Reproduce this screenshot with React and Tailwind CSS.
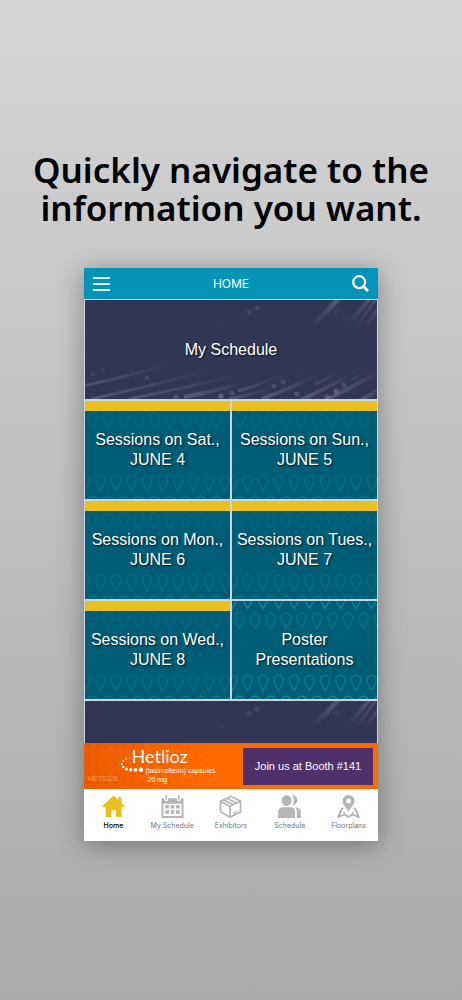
import React from "react";

const DROP_ROWS = [-8, 12, 33, 54, 74, 95];

function Drops({ strengths }) {
  return (
    <svg
      className="absolute inset-0 h-full w-full"
      viewBox="0 0 145 98"
      preserveAspectRatio="xMidYMid slice"
      fill="none"
      stroke="#0a9db8"
      strokeWidth="1.3"
      aria-hidden="true"
    >
      {DROP_ROWS.map((y, r) =>
        Array.from({ length: 11 }, (_, c) => {
          const x = c * 15.5 + (r % 2 ? 7.5 : 0);
          return (
            <path
              key={`${r}-${c}`}
              opacity={strengths[r]}
              d={`M${x} ${y + 15.5}C${x - 2} ${y + 11.5} ${x - 4.8} ${y + 9} ${x - 4.8} ${y + 5}A4.8 4.8 0 0 1 ${x + 4.8} ${y + 5}C${x + 4.8} ${y + 9} ${x + 2} ${y + 11.5} ${x} ${y + 15.5}Z`}
            />
          );
        })
      )}
    </svg>
  );
}

const STREAKS = [
  [-2, 86, 85, 64, 0.24, 3],
  [6, 99, 125, 70, 0.26, 3],
  [44, 99, 155, 74, 0.26, 3],
  [99, 97, 158, 83, 0.3, 4],
  [153, 91, 195, 75, 0.22, 3],
  [144, 99, 185, 88, 0.26, 3],
  [177, 99, 234, 74, 0.28, 4],
  [216, 100, 266, 74, 0.3, 4],
  [241, 100, 298, 69, 0.28, 4],
  [274, 101, 298, 86, 0.3, 4],
  [230, 84, 256, 70, 0.14, 3],
  [266, 80, 284, 68, 0.1, 3],
  [254, -2, 226, 26, 0.28, 5],
  [285, -2, 262, 24, 0.24, 4],
  [292, -3, 270, 27, 0.22, 3],
  [296, 4, 278, 28, 0.18, 4],
];

const SPOTS = [
  [8, 74, 0.1], [18, 71, 0.05], [62, 78, 0.13], [91, 97, 0.22], [136, 96, 0.34],
  [147, 93, 0.2], [164, 12, 0.11], [172, 8, 0.13], [251, 12, 0.07], [189, 86, 0.2],
  [198, 82, 0.16], [212, 94, 0.22], [242, 97, 0.26], [251, 91, 0.3], [259, 85, 0.2],
  [137, 24, 0.03], [216, 73, 0.04],
];

function Streaks({ id }) {
  return (
    <svg
      className="absolute inset-x-0 top-0 h-[99px] w-full"
      viewBox="0 0 292 99"
      preserveAspectRatio="xMidYMin slice"
      fill="none"
      aria-hidden="true"
    >
      <defs>
        {STREAKS.map(([x1, y1, x2, y2, o], i) => (
          <linearGradient key={i} id={`${id}-${i}`} gradientUnits="userSpaceOnUse" x1={x1} y1={y1} x2={x2} y2={y2}>
            <stop offset="0" stopColor="#b9b6c4" stopOpacity={o} />
            <stop offset="1" stopColor="#b9b6c4" stopOpacity="0" />
          </linearGradient>
        ))}
      </defs>
      {STREAKS.map(([x1, y1, x2, y2, , w], i) => (
        <path
          key={i}
          d={`M${x1} ${y1}Q${(x1 + x2) / 2 + 1} ${(y1 + y2) / 2 + 1.5} ${x2} ${y2}`}
          stroke={`url(#${id}-${i})`}
          strokeWidth={w}
        />
      ))}
      {SPOTS.map(([x, y, o], i) => (
        <circle key={i} cx={x} cy={y} r="2.6" fill="#b9b6c4" opacity={o} />
      ))}
    </svg>
  );
}

const LABEL =
  "relative text-center font-['Liberation_Sans',sans-serif] text-base leading-5 text-white [text-shadow:1px_1px_2px_rgba(0,0,0,0.75)]";

function Session({ day, date }) {
  return (
    <a href="#sessions" className="relative flex h-[98px] items-center justify-center overflow-hidden bg-[#005d75]">
      <Drops strengths={[0, 0.18, 0.04, 0.03, 0.28, 0.45]} />
      <span className="absolute inset-x-0 top-0 h-2.5 bg-[#e9c01d]" />
      <span className={LABEL}>
        Sessions on {day},<br />
        {date}
      </span>
    </a>
  );
}

const ICONS = {
  home: (
    <path d="M12 .5.500 11.600v1.200h3.300V23h6v-7h4.600v7h6V12.800h3.100v-1.200l-3.300-3.200V2h-3.200v3.300z" />
  ),
  calendar: (
    <path
      fillRule="evenodd"
      d="M.5 3.5h3v1a2 2 0 0 0 4 0v-1h9v1a2 2 0 0 0 4 0v-1h3V24H.5zM2.5 9v13h19V9zM4.6.8a.9.9 0 0 1 1.8 0v3.4a.9.9 0 0 1-1.8 0zm13 0a.9.9 0 0 1 1.8 0v3.4a.9.9 0 0 1-1.8 0zM4.5 10.5h3.8v3.6H4.5zm5.6 0h3.8v3.6h-3.8zm5.6 0h3.8v3.6h-3.8zM4.5 16h3.8v3.6H4.5zm5.6 0h3.8v3.6h-3.8zm5.6 0h3.8v3.6h-3.8z"
    />
  ),
  box: (
    <g fill="none" stroke="currentColor" strokeWidth="1.8" strokeLinejoin="round" strokeLinecap="round">
      <path d="M12.5 1.2 1.5 6.6v11l10 5.6 11-5.6v-11zM1.5 6.6l10 5.2 11-5.2M11.5 11.8v11.4M5 5.2l10.2 4.9M8.200 3.400l10.200 4.900" />
      <path strokeWidth="1.1" d="m15 18.8 4-2M15 20.6l2-1" />
    </g>
  ),
  people: (
    <path d="M9 0.2a5.2 5.2 0 0 1 5.2 5.4C14.2 8.800 12 11.400 9 11.400S3.800 8.800 3.800 5.600A5.200 5.200 0 0 1 9 .2zM14.600.3c3.200-.4 5.600 2 5.600 4.900 0 2.900-2.200 5.400-5.200 5.300 2.200-3 2.200-7.200-.4-10.200zM.2 24v-6.200c0-3.400 1.800-5 5-5h7.600c3.200 0 5 1.600 5 5V24zM19.600 24v-6.600c0-1.800-.5-3.300-1.500-4.400 3.500-.2 5.700 1.400 5.700 4.600V24z" />
  ),
  map: (
    <>
      <path
        fillRule="evenodd"
        d="M12 0a6.300 6.300 0 0 1 6.300 6.300c0 4-4 6.500-6.300 11.500-2.300-5-6.300-7.500-6.300-11.500A6.300 6.300 0 0 1 12 0zm0 3.700a2.600 2.600 0 1 0 0 5.200 2.600 2.600 0 0 0 0-5.200z"
      />
      <path
        d="M6.600 13.600 4.800 14.600 1.500 22.800 7.600 20.300 12 22.800 16.400 20.300 22.500 22.800 19.200 14.600 17.400 13.600"
        fill="none"
        stroke="currentColor"
        strokeWidth="2"
      />
      <path d="m7 17.500 1.500 3.300M17 17.500l-1.500 3.300" stroke="currentColor" strokeWidth="1.300" />
    </>
  ),
};

const TABS = [
  ["home", "Home"],
  ["calendar", "My Schedule"],
  ["box", "Exhibitors"],
  ["people", "Schedule"],
  ["map", "Floorplans"],
];

function Ad() {
  return (
    <a
      href="#booth-141"
      className="relative flex h-[46px] items-center justify-between overflow-hidden bg-[#ff6a00] py-1 pr-[5px] pl-1"
    >
      <svg className="absolute inset-0 h-full w-full" aria-hidden="true">
        <defs>
          <pattern id="halftone" width="9" height="9" patternUnits="userSpaceOnUse">
            <circle cx="4.500" cy="3.500" r="1.800" fill="#d94f00" />
          </pattern>
          <linearGradient id="halftone-fade">
            <stop offset="0" stopColor="#fff" stopOpacity="0.400" />
            <stop offset="0.550" stopColor="#fff" stopOpacity="0.300" />
            <stop offset="1" stopColor="#fff" stopOpacity="0" />
          </linearGradient>
          <linearGradient id="ad-shade">
            <stop offset="0" stopColor="#ec5c00" />
            <stop offset="0.400" stopColor="#ec5c00" stopOpacity="0" />
          </linearGradient>
          <mask id="halftone-mask">
            <rect width="55%" height="100%" fill="url(#halftone-fade)" />
          </mask>
        </defs>
        <rect width="100%" height="100%" fill="url(#ad-shade)" />
        <rect width="100%" height="100%" fill="url(#halftone)" mask="url(#halftone-mask)" />
      </svg>
      <span className="relative self-end font-['Liberation_Sans',sans-serif] text-[7px] leading-3 text-[#ff9a58]">
        HET0325
      </span>
      <span className="relative flex flex-1 items-end text-white">
        <svg className="mb-3 h-5 w-7 shrink-0" viewBox="0 0 28 20" fill="currentColor" aria-hidden="true">
          <circle cx="11.500" cy="4" r="0.700" />
          <circle cx="8.200" cy="5" r="0.800" />
          <circle cx="5.300" cy="7" r="0.900" />
          <circle cx="4" cy="10" r="1.100" />
          <circle cx="5.200" cy="13" r="1.300" />
          <circle cx="8.400" cy="15" r="1.500" />
          <circle cx="12.700" cy="15.800" r="1.700" />
          <circle cx="17.600" cy="15.800" r="1.900" />
          <circle cx="23" cy="15.800" r="2.200" />
        </svg>
        <span className="flex flex-col pb-0.5">
          <span className="-ml-3.5 font-['Lato',sans-serif] text-lg leading-5">Hetlioz</span>
          <span className="font-['Liberation_Sans',sans-serif] text-[7px] leading-[9px]">
            (tasimelteon) capsules
            <br />
            <span className="ml-0.5">20 mg</span>
          </span>
        </span>
      </span>
      <span className="relative flex h-[37px] w-[130px] items-center justify-center bg-[#50306a] font-['Liberation_Sans',sans-serif] text-[11px] text-white">
        Join us at Booth #141
      </span>
    </a>
  );
}

export default function App() {
  return (
    <main className="min-h-screen bg-linear-to-b from-[#d5d5d5] to-[#aaaaaa] pt-[151px] pb-[159px]">
      <h1 className="text-center font-['Noto_Sans',sans-serif] text-[35px] leading-[38px] font-semibold text-black">
        Quickly navigate to the
        <br />
        information you want.
      </h1>

      <div className="mt-[41px] px-21">
        <div className="bg-white shadow-[0_4px_24px_rgba(0,0,0,0.35)]">
          <header className="flex h-[31px] items-center justify-between bg-[#0394b8] px-[9px] text-white">
            <button aria-label="Menu" className="flex w-[17px] flex-col gap-1">
              <span className="h-0.5 w-full bg-white/85" />
              <span className="h-0.5 w-full bg-white/85" />
              <span className="h-0.5 w-full bg-white/85" />
            </button>
            <span className="font-['Inter',sans-serif] text-xs">HOME</span>
            <button aria-label="Search">
              <svg className="size-[17px]" viewBox="0 0 18 18" fill="none" stroke="currentColor" strokeWidth="2.400" aria-hidden="true">
                <circle cx="7.600" cy="7.600" r="6.300" />
                <path d="m12 12 5 5" strokeWidth="3" />
              </svg>
            </button>
          </header>

          <div className="grid grid-cols-2 gap-0.5 bg-[#ccd5da] px-px pt-px">
            <a href="#my-schedule" className="relative col-span-2 flex h-[99px] items-center justify-center overflow-hidden bg-[#323553]">
              <Streaks id="schedule-streak" />
              <span className={LABEL}>My Schedule</span>
            </a>
            <Session day="Sat." date="JUNE 4" />
            <Session day="Sun." date="JUNE 5" />
            <Session day="Mon." date="JUNE 6" />
            <Session day="Tues." date="JUNE 7" />
            <Session day="Wed." date="JUNE 8" />
            <a href="#posters" className="relative flex h-[98px] items-center justify-center overflow-hidden bg-[#005d75]">
              <Drops strengths={[0.7, 0.35, 0.08, 0.06, 0.5, 0.8]} />
              <span className={LABEL}>
                Poster
                <br />
                Presentations
              </span>
            </a>
            <div className="relative col-span-2 h-[42px] overflow-hidden bg-[#323553]">
              <Streaks id="next-streak" />
            </div>
          </div>

          <Ad />

          <nav className="grid h-[52px] grid-cols-5 bg-white font-['Inter',sans-serif] text-[7px] leading-[10px]">
            {TABS.map(([icon, label], i) => (
              <a
                key={icon}
                href={`#${icon}`}
                className={`flex flex-col items-center gap-[3px] pt-1.5 ${i === 0 ? "font-medium text-black" : "text-[#757575]"}`}
              >
                <svg
                  className={`size-[23px] ${i === 0 ? "text-[#e9c01d]" : "text-[#b5b5b5]"}`}
                  viewBox="0 0 24 24"
                  fill="currentColor"
                  aria-hidden="true"
                >
                  {ICONS[icon]}
                </svg>
                <span>{label}</span>
              </a>
            ))}
          </nav>
        </div>
      </div>
    </main>
  );
}
